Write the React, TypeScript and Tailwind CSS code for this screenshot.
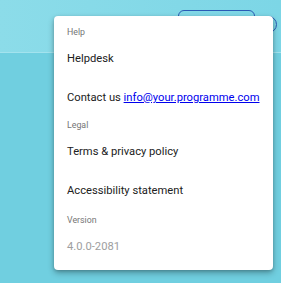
import React from "react";

export default function App() {
  return (
    <div
      className="relative w-[281px] h-[283px] overflow-hidden bg-[#70cfe0]"
      style={{ fontFamily: "Roboto, 'Noto Sans', sans-serif" }}
    >
      <div className="h-[53px] border-b border-[#a3e3ee] bg-gradient-to-r from-[#8cdce9] to-[#7cd6e6] relative">
        <div className="absolute left-[178px] top-[10px] w-[77px] h-[30px] rounded-[6px] border-[1.5px] border-[#2a5bb5]" />
        <div className="absolute left-[259px] top-[16px] w-[18px] h-[17px] rounded-full border-[1.5px] border-[#2a5bb5]" />
      </div>
      <div className="absolute left-[54px] top-[16px] w-[219px] h-[254px] rounded-[4px] bg-white shadow-[0_3px_6px_rgba(0,0,0,0.3),0_1px_3px_rgba(0,0,0,0.15)] pl-[13px] flex flex-col text-[11.2px] text-[#212121]">
        <div className="h-[24px] flex items-end pb-[1px] text-[8.8px] text-[#757575]">Help</div>
        <div className="h-[30px] flex items-end pb-[2px]">Helpdesk</div>
        <div className="h-[39px] flex items-end pb-[2px]">
          <span>
            Contact us{" "}
            <a href="#" className="text-[#0000ee] underline">info@your.programme.com</a>
          </span>
        </div>
        <div className="h-[24px] flex items-end pb-[1px] text-[8.8px] text-[#757575]">Legal</div>
        <div className="h-[30px] flex items-end pb-[2px]">Terms &amp; privacy policy</div>
        <div className="h-[39px] flex items-end pb-[2px]">Accessibility statement</div>
        <div className="h-[26px] flex items-end pb-[1px] text-[8.8px] text-[#757575]">Version</div>
        <div className="h-[30px] flex items-end pb-[2px] text-[#9e9e9e]">4.0.0-2081</div>
      </div>
    </div>
  );
}
